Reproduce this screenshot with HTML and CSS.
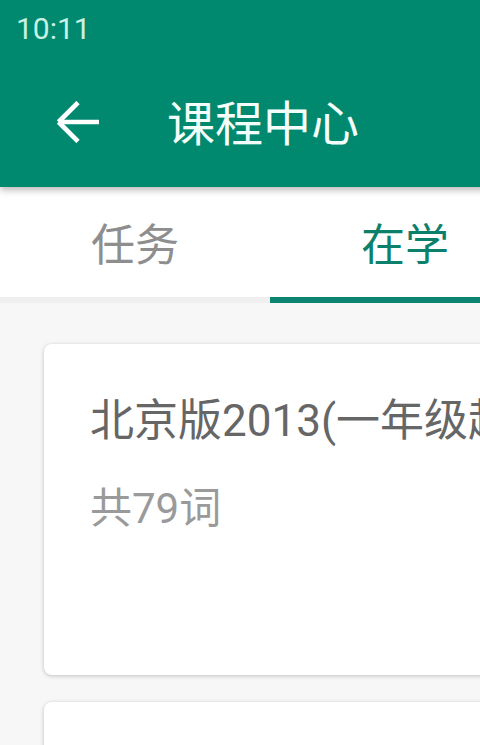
FILE: index.html
```html
<!DOCTYPE html>
<html lang="zh-CN">
<head>
<meta charset="utf-8">
<title>课程中心</title>
<link rel="stylesheet" href="styles.css">
</head>
<body>
<div class="screen">
  <header class="appbar">
    <div class="status">10:11</div>
    <div class="toolbar">
      <svg class="back" viewBox="0 0 45 42" width="45" height="42" aria-hidden="true">
        <line x1="4" y1="21" x2="44" y2="21" />
        <line x1="3.5" y1="21" x2="23" y2="1.5" />
        <line x1="3.5" y1="21" x2="23" y2="40.5" />
      </svg>
      <h1 class="title">课程中心</h1>
    </div>
  </header>
  <nav class="tabs">
    <div class="tab">任务</div>
    <div class="tab active">在学</div>
  </nav>
  <div class="tabline">
    <div class="track"></div>
    <div class="indicator"></div>
  </div>
  <main class="list">
    <section class="card">
      <div class="card-title">北京版2013(一年级起点)</div>
      <div class="card-sub">共79词</div>
    </section>
    <section class="card"></section>
  </main>
</div>
</body>
</html>
```

FILE: styles.css
```css
html, body {
  margin: 0;
  padding: 0;
  background: #f7f7f7;
  overflow: hidden;
}

.screen {
  width: 540px;
  height: 745px;
  overflow: hidden;
  font-family: Roboto, "Noto Sans CJK SC", sans-serif;
  background: #f7f7f7;
}

.appbar {
  position: relative;
  z-index: 2;
  background: #00896f;
  box-shadow: 0 3px 7px rgba(0, 0, 0, 0.28);
}

.status {
  height: 56px;
  display: flex;
  align-items: center;
  padding-left: 16px;
  font-size: 30px;
  color: #c9f1e4;
}

.toolbar {
  height: 131px;
  display: flex;
  align-items: center;
  padding-left: 55px;
}

.back {
  display: block;
  stroke: #ffffff;
  stroke-width: 4.6;
  stroke-linecap: butt;
  fill: none;
}

.title {
  margin: 0 0 0 67px;
  padding-bottom: 4px;
  font-size: 48px;
  font-weight: 400;
  color: #f4fffb;
  white-space: nowrap;
}

.tabs {
  display: flex;
  background: #ffffff;
  height: 110px;
}

.tab {
  flex: 1;
  text-align: center;
  font-size: 44px;
  padding-top: 8px;
  line-height: 102px;
  color: #8e8e8e;
}

.tab.active {
  color: #0d806b;
}

.tabline {
  display: flex;
  height: 6px;
}

.track {
  flex: 1;
  background: #efefef;
}

.indicator {
  flex: 1;
  background: #0d8470;
}

.list {
  display: flex;
  flex-direction: column;
  gap: 27px;
  padding: 41px 0 0 44px;
}

.card {
  width: 452px;
  height: 331px;
  flex: none;
  box-sizing: border-box;
  background: #ffffff;
  border-radius: 8px;
  box-shadow: 0 1px 4px rgba(0, 0, 0, 0.22);
  padding: 47px 0 0 46px;
  overflow: hidden;
}

.card-title {
  font-size: 44px;
  line-height: 60px;
  color: #666666;
  white-space: nowrap;
}

.card-sub {
  margin-top: 28px;
  font-size: 42px;
  line-height: 60px;
  color: #9a9a9a;
  white-space: nowrap;
}
```
